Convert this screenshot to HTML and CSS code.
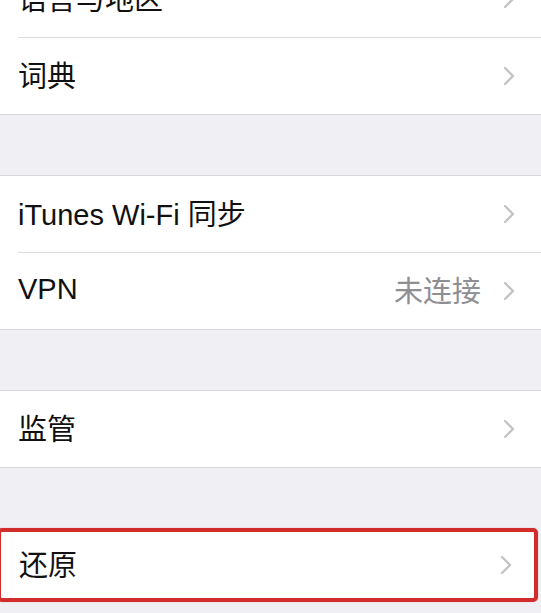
FILE: index.html
```html
<!DOCTYPE html>
<html lang="zh-CN">
<head>
<meta charset="utf-8">
<title>设置</title>
<link rel="stylesheet" href="styles.css">
</head>
<body>
<div class="page">
  <div class="group">
    <div class="row"><div class="row-body"><span class="label">语言与地区</span><svg class="chev" viewBox="0 0 12 20"><polyline points="2,2 10,10 2,18"/></svg></div></div>
    <div class="row"><div class="row-body"><span class="label">词典</span><svg class="chev" viewBox="0 0 12 20"><polyline points="2,2 10,10 2,18"/></svg></div></div>
  </div>
  <div class="gap"></div>
  <div class="group">
    <div class="row"><div class="row-body"><span class="label">iTunes Wi-Fi 同步</span><svg class="chev" viewBox="0 0 12 20"><polyline points="2,2 10,10 2,18"/></svg></div></div>
    <div class="row"><div class="row-body"><span class="label">VPN</span><span class="value">未连接</span><svg class="chev" viewBox="0 0 12 20"><polyline points="2,2 10,10 2,18"/></svg></div></div>
  </div>
  <div class="gap"></div>
  <div class="group">
    <div class="row"><div class="row-body"><span class="label">监管</span><svg class="chev" viewBox="0 0 12 20"><polyline points="2,2 10,10 2,18"/></svg></div></div>
  </div>
  <div class="gap"></div>
  <div class="group highlight">
    <div class="row"><div class="row-body"><span class="label">还原</span><svg class="chev" viewBox="0 0 12 20"><polyline points="2,2 10,10 2,18"/></svg></div></div>
  </div>
</div>
</body>
</html>
```
FILE: styles.css
```css
html, body {
  margin: 0;
  padding: 0;
  background: #efeff4;
  overflow: hidden;
}
body {
  width: 541px;
  height: 613px;
  font-family: "Liberation Sans", "Noto Sans CJK SC", sans-serif;
  font-size: 29px;
  color: #111;
}
.page {
  margin-top: -40px;
}
.group {
  background: #fff;
  border-top: 1px solid #d8d8dc;
  border-bottom: 1px solid #d8d8dc;
}
.gap {
  height: 60px;
}
.row {
  padding-left: 18px;
}
.row-body {
  box-sizing: border-box;
  height: 77px;
  display: flex;
  align-items: center;
  border-bottom: 1px solid #dcdcdf;
  padding-right: 26px;
}
.row:last-child .row-body {
  height: 76px;
  border-bottom: none;
}
.label {
  flex: 1;
  white-space: nowrap;
  padding-bottom: 4px;
}
.value {
  color: #8e8e93;
  margin-right: 22px;
  padding-bottom: 4px;
}
.chev {
  width: 12px;
  height: 20px;
  fill: none;
  stroke: #c4c4c8;
  stroke-width: 2.4;
  stroke-linecap: round;
  stroke-linejoin: round;
}
.highlight {
  border: 4px solid #d22d2b;
  border-radius: 5px;
  margin-left: -3px;
  margin-right: 3px;
  margin-top: 0;
  box-shadow: 0 0 1px rgba(210, 45, 43, 0.5);
}
.highlight .row {
  padding-left: 18px;
}
.highlight .row:last-child .row-body {
  height: 66px;
  padding-right: 22px;
}
```
